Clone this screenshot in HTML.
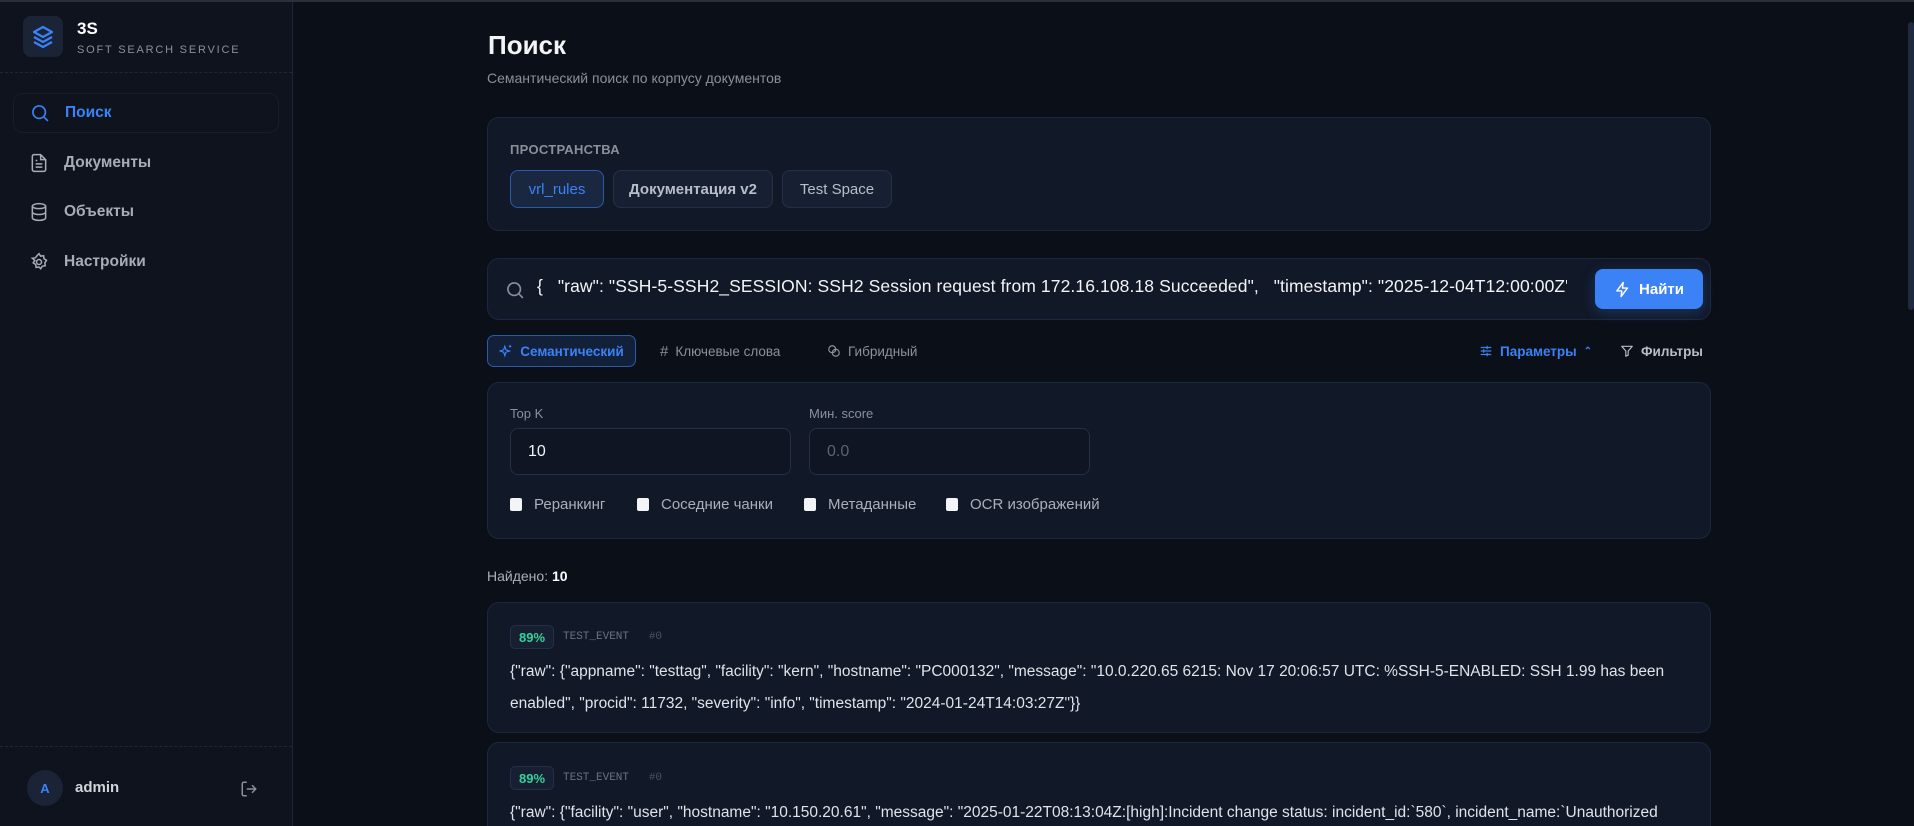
<!DOCTYPE html>
<html style="width:1914px;height:826px;overflow:hidden"><head><meta charset="utf-8"><style>
*{box-sizing:border-box;margin:0;padding:0}
body{width:1914px;height:826px;overflow:hidden;background:#0b0f17;font-family:"Liberation Sans","Noto Sans CJK SC",sans-serif;color:#e5e7eb;position:relative}
.abs{position:absolute}
.top{left:0;top:0;width:1914px;height:2px;background:#2a2f3a}
.side{left:0;top:2px;width:293px;height:824px;background:#0f131d;border-right:1px solid #1c2540}
.logo{left:23px;top:16px;width:40px;height:41px;border-radius:8px;background:#1a2436}
.nav{left:13px;width:266px;height:40px;display:flex;align-items:center;padding-left:16px;font-size:15.5px;color:#a7adb8;font-weight:bold}
.nav svg{margin-right:15px}
.card{background:#111827;border:1px solid #1c2740;border-radius:12px}
.chip{top:170px;height:38px;border-radius:8px;border:1px solid #253047;background:#172032;font-size:15px;font-weight:bold;color:#b8bec8;display:flex;align-items:center;justify-content:center}
.tab{top:335px;height:32px;display:flex;align-items:center;font-size:13.5px;color:#8a919d;gap:7px}
.inp{top:428px;height:47px;border:1px solid #253047;border-radius:8px;background:#0f1522;font-size:16px;display:flex;align-items:center;padding-left:17px}
.cb{top:496px;display:flex;align-items:center;font-size:15px;color:#aab0ba}
.cb i{display:inline-block;width:12px;height:13px;background:#f3f4f6;border-radius:2px;margin-right:12px}
.badge{height:24px;width:44px;border:1px solid #253047;background:#172033;border-radius:5px;color:#34d399;font-size:13px;font-weight:bold;display:flex;align-items:center;justify-content:center}
.meta{font-family:"Liberation Mono",monospace;font-size:11px;color:#6b7280}
.res{font-size:15.5px;color:#dfe3ea;line-height:32px;letter-spacing:0}
</style></head><body>
<div class="abs top"></div>
<div class="abs side"></div>
<div class="abs logo"><svg width="40" height="41" viewBox="0 0 40 41"><g fill="none" stroke="#3b82f6" stroke-width="2.2" stroke-linejoin="round"><path d="M20 11l-9 5 9 5 9-5z"/><path d="M11 21l9 5 9-5"/><path d="M11 26l9 5 9-5"/></g></svg></div>
<div class="abs" style="left:77px;top:19px;font-size:17px;font-weight:bold;color:#fff">3S</div>
<div class="abs" style="left:77px;top:44px;font-size:11px;letter-spacing:1.8px;color:#8a909b">SOFT SEARCH SERVICE</div>
<div class="abs" style="left:0;top:72px;width:292px;border-top:1px dashed #1f2737"></div>
<div class="abs nav" style="top:93px;border:1px solid #161e2e;border-radius:10px;color:#3b82f6"><svg width="20" height="20" viewBox="0 0 24 24" fill="none" stroke="#3b82f6" stroke-width="2"><circle cx="11" cy="11" r="7.5"/><path d="M17 17l4.5 4.5"/></svg>Поиск</div>
<div class="abs nav" style="top:143px"><svg width="20" height="20" viewBox="0 0 24 24" fill="none" stroke="#a7adb8" stroke-width="1.8"><path d="M14 2H6a2 2 0 0 0-2 2v16a2 2 0 0 0 2 2h12a2 2 0 0 0 2-2V8z"/><path d="M14 2v6h6M8 13h8M8 17h8M8 9h2"/></svg>Документы</div>
<div class="abs nav" style="top:192px"><svg width="20" height="20" viewBox="0 0 24 24" fill="none" stroke="#a7adb8" stroke-width="1.8"><ellipse cx="12" cy="5" rx="8" ry="3"/><path d="M4 5v14c0 1.7 3.6 3 8 3s8-1.3 8-3V5M4 12c0 1.7 3.6 3 8 3s8-1.3 8-3"/></svg>Объекты</div>
<div class="abs nav" style="top:242px"><svg width="20" height="20" viewBox="0 0 24 24" fill="none" stroke="#a7adb8" stroke-width="1.8"><circle cx="12" cy="12" r="3"/><path d="M12 2l2 3 3.5-.5.5 3.5 3 2-2 3 .5 3.5-3.5.5-2 3-2-2-3.5.5-.5-3.5-3-2 2-3L4 7.5 7.5 7 10 4z"/></svg>Настройки</div>
<div class="abs" style="left:0;top:746px;width:292px;border-top:1px dashed #1f2737"></div>
<div class="abs" style="left:27px;top:770px;width:36px;height:36px;border-radius:50%;background:#1a2436;color:#3b82f6;font-weight:bold;font-size:13px;display:flex;align-items:center;justify-content:center">A</div>
<div class="abs" style="left:75px;top:779px;font-size:15px;font-weight:bold;color:#d1d5db">admin</div>
<svg class="abs" style="left:240px;top:780px" width="18" height="18" viewBox="0 0 24 24" fill="none" stroke="#8a909b" stroke-width="2"><path d="M9 21H5a2 2 0 0 1-2-2V5a2 2 0 0 1 2-2h4M16 17l5-5-5-5M21 12H9"/></svg>

<div class="abs" style="left:488px;top:30px;font-size:26px;font-weight:bold;color:#f3f4f6">Поиск</div>
<div class="abs" style="left:487px;top:70px;font-size:14px;color:#8a909b">Семантический поиск по корпусу документов</div>

<div class="abs card" style="left:487px;top:117px;width:1224px;height:114px"></div>
<div class="abs" style="left:510px;top:142px;font-size:13px;font-weight:bold;color:#8a909b;letter-spacing:.3px">ПРОСТРАНСТВА</div>
<div class="abs chip" style="left:510px;width:94px;background:#1a2740;border-color:#2b5aa6;color:#3b82f6;font-weight:normal">vrl_rules</div>
<div class="abs chip" style="left:613px;width:160px">Документация v2</div>
<div class="abs chip" style="left:782px;width:110px;font-weight:normal">Test Space</div>

<div class="abs card" style="left:487px;top:258px;width:1224px;height:62px;border-radius:12px"></div>
<svg class="abs" style="left:505px;top:280px" width="20" height="20" viewBox="0 0 24 24" fill="none" stroke="#8a909b" stroke-width="2"><circle cx="11" cy="11" r="7.5"/><path d="M17 17l4.5 4.5"/></svg>
<div class="abs" style="left:537px;top:276px;width:1030px;overflow:hidden;white-space:nowrap;font-size:17.5px;color:#f3f4f6;letter-spacing:0.1px">{&nbsp;&nbsp; "raw": "SSH-5-SSH2_SESSION: SSH2 Session request from 172.16.108.18 Succeeded",&nbsp;&nbsp; "timestamp": "2025-12-04T12:00:00Z"</div>
<div class="abs" style="left:1595px;top:269px;width:108px;height:40px;border-radius:8px;background:#3b82f6;box-shadow:0 4px 14px rgba(59,130,246,.25);display:flex;align-items:center;justify-content:center;gap:8px;color:#fff;font-weight:bold;font-size:15px"><svg width="17" height="17" viewBox="0 0 24 24" fill="none" stroke="#fff" stroke-width="2" stroke-linejoin="round"><path d="M13 2L4 14h7l-1 8 9-12h-7z"/></svg>Найти</div>

<div class="abs tab" style="left:487px;width:149px;border:1px solid #2b5aa6;background:#132039;border-radius:7px;color:#3b82f6;justify-content:center;font-weight:bold"><svg width="14" height="14" viewBox="0 0 24 24" fill="none" stroke="#3b82f6" stroke-width="2"><path d="M10 4l2 6 6 2-6 2-2 6-2-6-6-2 6-2zM19 2v4M17 4h4"/></svg>Семантический</div>
<div class="abs tab" style="left:660px"><span style="font-size:15px">#</span>Ключевые слова</div>
<div class="abs tab" style="left:827px"><svg width="14" height="14" viewBox="0 0 24 24" fill="none" stroke="#8a919d" stroke-width="2"><circle cx="9" cy="9" r="6"/><circle cx="15" cy="15" r="6"/></svg>Гибридный</div>
<div class="abs tab" style="left:1479px;color:#3b82f6;font-weight:bold"><svg width="14" height="14" viewBox="0 0 24 24" fill="none" stroke="#3b82f6" stroke-width="2"><path d="M3 6h18M3 12h18M3 18h18M14 3v6M8 9v6M14 15v6"/></svg>Параметры <span style="font-size:10px">⌃</span></div>
<div class="abs tab" style="left:1620px;color:#b8bec8;font-weight:bold"><svg width="14" height="14" viewBox="0 0 24 24" fill="none" stroke="#b8bec8" stroke-width="2" stroke-linejoin="round"><path d="M3 4h18l-7 8v7l-4 2v-9z"/></svg>Фильтры</div>

<div class="abs card" style="left:487px;top:382px;width:1224px;height:157px"></div>
<div class="abs" style="left:510px;top:406px;font-size:13px;color:#8a909b">Top K</div>
<div class="abs" style="left:809px;top:406px;font-size:13px;color:#8a909b">Мин. score</div>
<div class="abs inp" style="left:510px;width:281px;color:#f3f4f6">10</div>
<div class="abs inp" style="left:809px;width:281px;color:#5b6270">0.0</div>
<div class="abs cb" style="left:510px"><i></i>Реранкинг</div>
<div class="abs cb" style="left:637px"><i></i>Соседние чанки</div>
<div class="abs cb" style="left:804px"><i></i>Метаданные</div>
<div class="abs cb" style="left:946px"><i></i>OCR изображений</div>

<div class="abs" style="left:487px;top:568px;font-size:14px;color:#aab0ba">Найдено: <b style="color:#fff">10</b></div>

<div class="abs card" style="left:487px;top:602px;width:1224px;height:131px"></div>
<div class="abs badge" style="left:510px;top:625px">89%</div>
<div class="abs meta" style="left:563px;top:631px">TEST_EVENT&nbsp;&nbsp;&nbsp;<span style="color:#4b5260">#0</span></div>
<div class="abs res" style="left:510px;top:656px;width:1160px">{"raw": {"appname": "testtag", "facility": "kern", "hostname": "PC000132", "message": "10.0.220.65 6215: Nov 17 20:06:57 UTC: %SSH-5-ENABLED: SSH 1.99 has been enabled", "procid": 11732, "severity": "info", "timestamp": "2024-01-24T14:03:27Z"}}</div>

<div class="abs card" style="left:487px;top:742px;width:1224px;height:100px;border-bottom:none"></div>
<div class="abs badge" style="left:510px;top:766px">89%</div>
<div class="abs meta" style="left:563px;top:772px">TEST_EVENT&nbsp;&nbsp;&nbsp;<span style="color:#4b5260">#0</span></div>
<div class="abs res" style="left:510px;top:797px;width:1180px;height:29px;white-space:nowrap;overflow:hidden">{"raw": {"facility": "user", "hostname": "10.150.20.61", "message": "2025-01-22T08:13:04Z:[high]:Incident change status: incident_id:`580`, incident_name:`Unauthorized</div>

<div class="abs" style="left:1908px;top:22px;width:6px;height:288px;background:#1f2a3f;border-radius:3px"></div>
</body></html>
